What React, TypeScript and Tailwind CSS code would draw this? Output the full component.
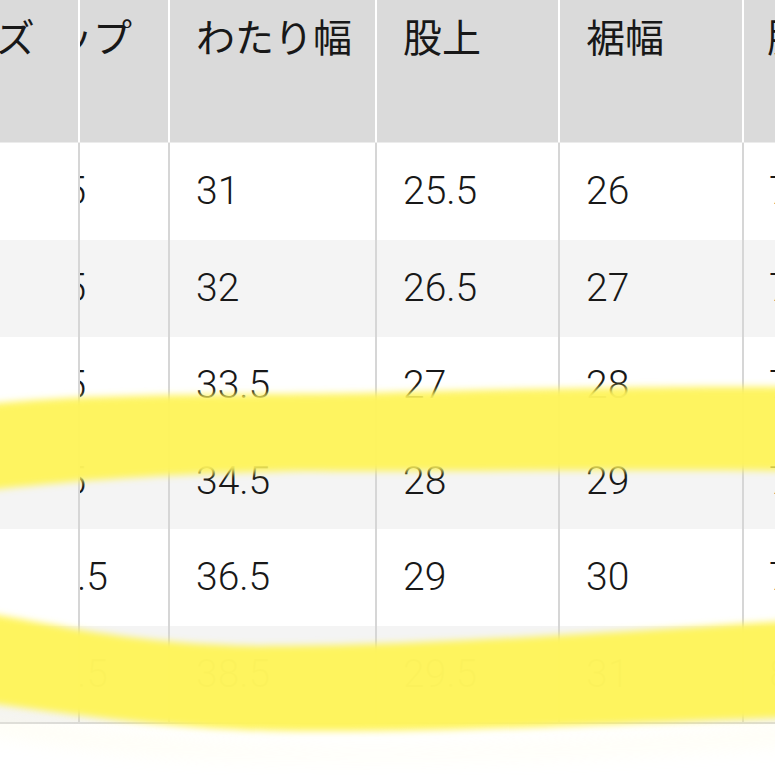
import React from "react";

const rows = [
  { c2: "93.5", c3: "31", c4: "25.5", c5: "26", c6: "76" },
  { c2: "95.5", c3: "32", c4: "26.5", c5: "27", c6: "77" },
  { c2: "97.5", c3: "33.5", c4: "27", c5: "28", c6: "78" },
  { c2: "99.5", c3: "34.5", c4: "28", c5: "29", c6: "79" },
  { c2: "101.5", c3: "36.5", c4: "29", c5: "30", c6: "79" },
  { c2: "105.5", c3: "38.5", c4: "29.5", c5: "31", c6: "80" },
];

const heights = ["h-[97px]", "h-[97px]", "h-[96px]", "h-[96px]", "h-[97px]", "h-[96px]"];

export default function App() {
  return (
    <div className="relative w-[775px] h-[775px] overflow-hidden bg-white text-[#181818]">
      <div className="flex flex-col w-[775px]">
        {/* header */}
        <div
          className="flex h-[143px] bg-[#dadada] text-[39px] leading-[58px] border-b border-[#ececec]"
          style={{ fontFamily: '"Noto Sans CJK JP", "Noto Sans", sans-serif' }}
        >
          <div className="w-[80px] border-r-2 border-white overflow-hidden pt-[6px]">
            <div className="ml-[-81px] whitespace-nowrap">サイズ</div>
          </div>
          <div className="w-[90px] border-r-2 border-white overflow-hidden pt-[6px]">
            <div className="ml-[-65px] whitespace-nowrap">ヒップ</div>
          </div>
          <div className="w-[207px] border-r-2 border-white overflow-hidden pt-[6px] pl-[26px] whitespace-nowrap">
            わたり幅
          </div>
          <div className="w-[183px] border-r-2 border-white overflow-hidden pt-[6px] pl-[26px] whitespace-nowrap">
            股上
          </div>
          <div className="w-[184px] border-r-2 border-white overflow-hidden pt-[6px] pl-[26px] whitespace-nowrap">
            裾幅
          </div>
          <div className="flex-1 overflow-hidden pt-[6px] pl-[23px] whitespace-nowrap">股下</div>
        </div>
        {/* body */}
        <div
          className="flex flex-col text-[39px] font-light border-b-2 border-[#d8d8d8]"
          style={{ fontFamily: 'Roboto, "Noto Sans", sans-serif' }}
        >
          {rows.map((r, i) => (
            <div
              key={i}
              className={`flex ${heights[i]} ${i % 2 === 1 ? "bg-[#f4f4f4]" : "bg-white"}`}
            >
              <div className="w-[80px] border-r-2 border-[#d6d6d6]" />
              <div className="w-[90px] border-r-2 border-[#d6d6d6] overflow-hidden flex items-center">
                <div className="ml-[-68px] whitespace-nowrap">{r.c2}</div>
              </div>
              <div className="w-[207px] border-r-2 border-[#d6d6d6] flex items-center pl-[26px]">
                {r.c3}
              </div>
              <div className="w-[183px] border-r-2 border-[#d6d6d6] flex items-center pl-[26px]">
                {r.c4}
              </div>
              <div className="w-[184px] border-r-2 border-[#d6d6d6] flex items-center pl-[26px]">
                {r.c5}
              </div>
              <div className="flex-1 overflow-hidden flex items-center pl-[25px] whitespace-nowrap">
                {r.c6}
              </div>
            </div>
          ))}
        </div>
      </div>

      {/* highlighter strokes */}
      <svg
        className="absolute inset-0 pointer-events-none"
        width="775"
        height="775"
        viewBox="0 0 775 775"
      >
        <defs>
          <filter id="soft" x="-10%" y="-30%" width="120%" height="160%">
            <feGaussianBlur stdDeviation="3.5" />
          </filter>
          <filter id="halo" x="-10%" y="-50%" width="120%" height="200%">
            <feGaussianBlur stdDeviation="10" />
          </filter>
        </defs>
        <path
          d="M-20,712 C120,738 250,752 400,750 C560,746 680,735 800,725 L800,742 C600,756 400,764 200,756 C100,750 40,740 -20,730 Z"
          fill="#fffbd8"
          opacity="0.3"
          filter="url(#halo)"
        />
        <g filter="url(#soft)">
          <path
            d="M-20,405 C100,391 300,396 400,392 C550,388 700,386 800,387 L800,471 C650,469 450,472 300,471 C150,474 60,482 -20,491 Z"
            fill="#fef45c"
            fillOpacity="0.97"
          />
          <path
            d="M-20,612 C60,625 130,644 260,646 C410,646 600,633 800,620 L800,717 C600,724 450,732 300,731 C180,730 100,718 -20,702 Z"
            fill="#fef45c"
            fillOpacity="0.99"
          />
        </g>
      </svg>
    </div>
  );
}
